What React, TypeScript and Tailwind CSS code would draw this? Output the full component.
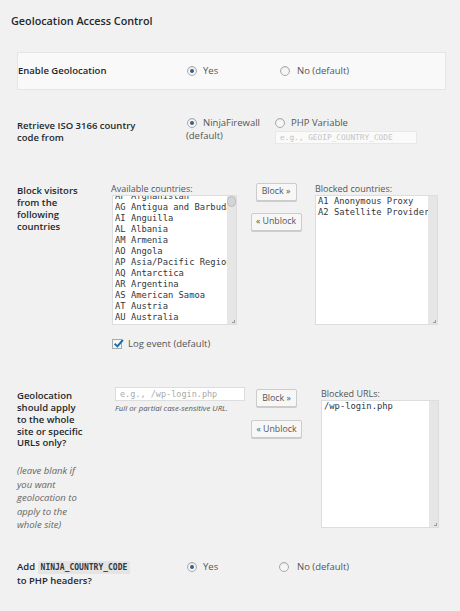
import React from 'react';

const available = [
  'AF Afghanistan',
  'AG Antigua and Barbuda',
  'AI Anguilla',
  'AL Albania',
  'AM Armenia',
  'AO Angola',
  'AP Asia/Pacific Region',
  'AQ Antarctica',
  'AR Argentina',
  'AS American Samoa',
  'AT Austria',
  'AU Australia',
  'AW Aruba',
];

const blocked = ['A1 Anonymous Proxy', 'A2 Satellite Provider'];

function Radio({ checked = false }: { checked?: boolean }) {
  return (
    <span className="flex h-[10px] w-[10px] shrink-0 items-center justify-center rounded-full border border-[#a7aaad] bg-[#f6f6f6] shadow-[inset_0_1px_1px_rgba(0,0,0,0.1)]">
      {checked && <span className="h-[4px] w-[4px] rounded-full bg-[#3f5f80]" />}
    </span>
  );
}

function Checkbox() {
  return (
    <span className="relative flex h-[10px] w-[10px] shrink-0 items-center justify-center border border-[#a7aaad] bg-[#f6f6f6]">
      <svg viewBox="0 0 10 10" className="absolute -top-[2px] left-[0px] h-[11px] w-[11px]">
        <path d="M1.5 5.2 L4 7.6 L9 1.8" fill="none" stroke="#1e6fa8" strokeWidth="1.8" />
      </svg>
    </span>
  );
}

function Button({ children, width }: { children: React.ReactNode; width: string }) {
  return (
    <div
      className={`${width} flex h-[18px] items-center justify-center rounded-[2px] border border-[#cccccc] bg-[#f7f7f7] text-[8.8px] text-[#555] shadow-[0_1px_0_#ccc]`}
    >
      {children}
    </div>
  );
}

function ListBox({ items, width, height, thumb = false, offset = '' }: { items: string[]; width: string; height: string; thumb?: boolean; offset?: string }) {
  return (
    <div className={`${width} ${height} flex overflow-hidden border border-[#dddddd] bg-white`}>
      <div className="flex-1 overflow-hidden pl-[2px] font-['DejaVu_Sans_Mono',monospace] text-[8.8px] leading-[11px] whitespace-nowrap text-[#32373c]">
        <div className={offset}>
          {items.map((it) => (
            <div key={it}>{it}</div>
          ))}
        </div>
      </div>
      <div className="relative flex w-[9px] shrink-0 flex-col bg-[#e6e6e6]">
        {thumb && <div className="mx-auto h-[11px] w-[9px] rounded-full border border-[#bbb] bg-[#d4d4d4]" />}
        <div className="absolute bottom-[1px] right-[1px] h-[3px] w-[3px] border-b border-r border-[#999]" />
      </div>
    </div>
  );
}

export default function App() {
  return (
    <div className="h-[611px] w-[460px] overflow-hidden bg-[#f1f1f1] font-['Open_Sans',sans-serif] text-[#444]">
      <div className="pl-[11px] pt-[14px] text-[10.8px] font-semibold leading-[14px] text-[#23282d]">
        Geolocation Access Control
      </div>

      {/* enable */}
      <div className="ml-[17px] mt-[24px] flex h-[38px] w-[429px] items-center border border-[#e5e5e5] bg-[#f9f9f9]">
        <div className="w-[169px] text-[9.5px] font-semibold text-[#23282d]">Enable Geolocation</div>
        <div className="flex w-[93px] items-center gap-[6px] text-[9.5px] text-[#555]">
          <Radio checked />
          Yes
        </div>
        <div className="flex items-center gap-[7px] text-[9.5px] text-[#555]">
          <Radio />
          No (default)
        </div>
      </div>

      {/* source */}
      <div className="ml-[17px] mt-[27px] flex items-start">
        <div className="w-[170px] pt-[3px] text-[9.5px] font-semibold leading-[12px] text-[#23282d]">
          Retrieve ISO 3166 country
          <br />
          code from
        </div>
        <div className="w-[88px] text-[9.5px] text-[#555]">
          <div className="flex h-[12px] items-center gap-[6px]">
            <Radio checked />
            NinjaFirewall
          </div>
          <div className="-ml-[1px] leading-[14px]">(default)</div>
        </div>
        <div className="text-[9.5px] text-[#555]">
          <div className="flex h-[12px] items-center gap-[6px]">
            <Radio />
            PHP Variable
          </div>
          <div className="mt-[2px] flex h-[13px] w-[142px] items-center border border-[#e8e8e8] bg-[#fafafa] pl-[4px] font-['DejaVu_Sans_Mono',monospace] text-[7.8px] text-[#c4c4c4]">
            e.g., GEOIP_COUNTRY_CODE
          </div>
        </div>
      </div>

      {/* countries */}
      <div className="ml-[17px] mt-[38px] flex items-start">
        <div className="w-[94px]">
          <div className="w-[70px] pt-[3px] text-[9.5px] font-semibold leading-[12px] text-[#23282d]">
            Block visitors from the following countries
          </div>
        </div>
        <div>
          <div className="text-[9px] leading-[13px] text-[#555]">Available countries:</div>
          <div className="ml-[1px]">
            <ListBox items={available} width="w-[125px]" height="h-[130px]" thumb offset="-mt-[5px]" />
          </div>
          <div className="ml-[1px] mt-[12px] flex items-center gap-[6px] text-[9.5px] text-[#555]">
            <Checkbox />
            Log event (default)
          </div>
        </div>
        <div className="flex w-[78px] flex-col items-center gap-[12px] pt-[1px]">
          <Button width="w-[41px]">Block »</Button>
          <Button width="w-[51px]">« Unblock</Button>
        </div>
        <div>
          <div className="text-[9px] leading-[13px] text-[#555]">Blocked countries:</div>
          <ListBox items={blocked} width="w-[123px]" height="h-[130px]" />
        </div>
      </div>

      {/* urls */}
      <div className="ml-[17px] mt-[36px] flex items-start">
        <div className="w-[98px] pt-[3px]">
          <div className="w-[70px] text-[9.5px] font-semibold leading-[11.75px] text-[#23282d]">
            Geolocation should apply to the whole site or specific URLs only?
          </div>
          <div className="mt-[15px] w-[70px] text-[9.5px] italic leading-[13.5px] text-[#666]">
            (leave blank if you want geolocation to apply to the whole site)
          </div>
        </div>
        <div className="w-[130px]">
          <div className="flex h-[14px] w-[130px] items-center border border-[#dddddd] bg-white pl-[4px] font-['DejaVu_Sans_Mono',monospace] text-[8.5px] text-[#aaa]">
            e.g., /wp-login.php
          </div>
          <div className="mt-[2px] text-[7.8px] italic leading-[10px] text-[#555]">Full or partial case-sensitive URL.</div>
        </div>
        <div className="flex w-[63px] flex-col items-center gap-[13px] pt-[2px]">
          <Button width="w-[41px]">Block »</Button>
          <Button width="w-[51px]">« Unblock</Button>
        </div>
        <div className="ml-[13px] pt-[1px]">
          <div className="text-[9px] leading-[12px] text-[#555]">Blocked URLs:</div>
          <ListBox items={['/wp-login.php']} width="w-[118px]" height="h-[128px]" />
        </div>
      </div>

      {/* header */}
      <div className="ml-[17px] mt-[27px] flex items-start">
        <div className="w-[170px] pt-[1px] text-[9.5px] font-semibold leading-[13px] text-[#23282d]">
          Add{' '}
          <code className="bg-[#e4e4e4] px-[3px] py-[2px] font-['DejaVu_Sans_Mono',monospace] text-[8px] font-bold text-[#32373c]">
            NINJA_COUNTRY_CODE
          </code>
          <br />
          to PHP headers?
        </div>
        <div className="flex w-[92px] items-center gap-[6px] pt-[1px] text-[9.5px] text-[#555]">
          <Radio checked />
          Yes
        </div>
        <div className="flex items-center gap-[8px] pt-[1px] text-[9.5px] text-[#555]">
          <Radio />
          No (default)
        </div>
      </div>
    </div>
  );
}
